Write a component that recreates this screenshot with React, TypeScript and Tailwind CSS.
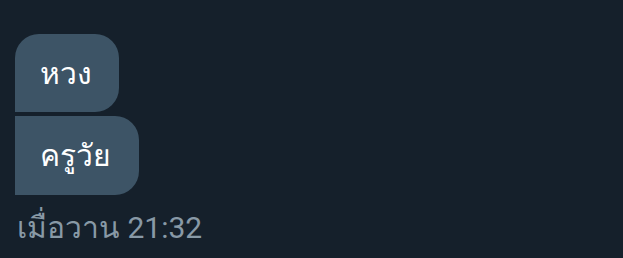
import React from 'react';

const App: React.FC = () => {
  return (
    <div
      className="w-[623px] h-[258px] bg-[#15202b] px-[15px] pt-[34px] flex flex-col items-start"
      style={{ fontFamily: 'Roboto, "Noto Sans", sans-serif' }}
    >
      {/* Message bubbles */}
      <div className="flex flex-col items-start gap-[4px]">
        <div className="h-[78px] pl-[25px] pr-[27px] flex items-center bg-[#3d5466] text-white text-[30px] rounded-tl-[24px] rounded-tr-[24px] rounded-br-[24px]">
          หวง
        </div>
        <div className="h-[79px] pl-[25px] pr-[28px] flex items-center bg-[#3d5466] text-white text-[30px] rounded-tr-[24px] rounded-br-[24px]">
          ครูวัย
        </div>
      </div>

      {/* Timestamp */}
      <div className="mt-[13px] pl-[2px] text-[30px] leading-[40px] text-[#8899a6]">
        เมื่อวาน 21:32
      </div>
    </div>
  );
};

export default App;
